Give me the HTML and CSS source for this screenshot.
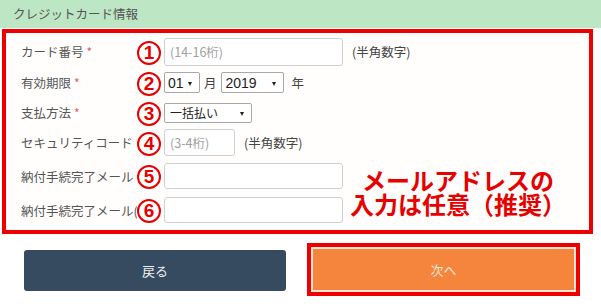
FILE: index.html
```html
<!DOCTYPE html>
<html lang="ja">
<head>
<meta charset="utf-8">
<title>クレジットカード情報</title>
<link rel="stylesheet" href="styles.css">
</head>
<body>
<header class="titlebar">クレジットカード情報</header>
<section class="card-box">
  <div class="form-grid">
    <div class="row">
      <div class="label">カード番号<span class="req">*</span></div>
      <span class="mark">1</span>
      <div class="control">
        <input class="text w-card" type="text" placeholder="(14-16桁)">
        <span class="note">(半角数字)</span>
      </div>
    </div>
    <div class="row">
      <div class="label">有効期限<span class="req">*</span></div>
      <span class="mark">2</span>
      <div class="control">
        <span class="select w-month"><span class="val">01</span><span class="arrow"></span></span>
        <span class="unit month">月</span>
        <span class="select w-year"><span class="val">2019</span><span class="arrow"></span></span>
        <span class="unit year">年</span>
      </div>
    </div>
    <div class="row">
      <div class="label">支払方法<span class="req">*</span></div>
      <span class="mark">3</span>
      <div class="control">
        <span class="select w-pay"><span class="val pay">一括払い</span><span class="arrow"></span></span>
      </div>
    </div>
    <div class="row">
      <div class="label">セキュリティコード<span class="req">*</span></div>
      <span class="mark">4</span>
      <div class="control">
        <input class="text w-cvc" type="text" placeholder="(3-4桁)">
        <span class="note">(半角数字)</span>
      </div>
    </div>
    <div class="row">
      <div class="label">納付手続完了メール</div>
      <span class="mark">5</span>
      <div class="control">
        <input class="text w-mail" type="text">
      </div>
    </div>
    <div class="row">
      <div class="label">納付手続完了メール(確認用)</div>
      <span class="mark">6</span>
      <div class="control">
        <input class="text w-mail" type="text">
      </div>
    </div>
  </div>
  <p class="annotation">メールアドレスの<br>入力は任意（推奨）</p>
</section>
<div class="actions">
  <button class="btn back" type="button">戻る</button>
  <button class="btn next" type="button">次へ</button>
</div>
</body>
</html>
```

FILE: styles.css
```css
* { box-sizing: border-box; }

html, body {
  margin: 0;
  padding: 0;
  background: #ffffff;
}

body {
  width: 601px;
  height: 306px;
  overflow: hidden;
  font-family: "Noto Sans CJK JP", "Noto Sans", sans-serif;
  color: #555;
}

.titlebar {
  height: 28px;
  line-height: 28px;
  padding-left: 13px;
  background: #bde6c4;
  font-size: 12.5px;
  color: #555;
}

.card-box {
  position: relative;
  margin: 1px 8px 0 2px;
  border: 4px solid #ee0000;
  background: #fffefd;
  padding: 3px 0 4px 15px;
}

.form-grid {
  display: grid;
  grid-template-rows: 31px 31px 29px 31px 36px 32px;
}

.row {
  position: relative;
  display: flex;
  align-items: center;
}

.label {
  width: 116px;
  margin-right: 27px;
  flex: none;
  font-size: 12.5px;
  color: #555;
  white-space: nowrap;
  overflow: hidden;
}

.req {
  color: #e65a5a;
  margin-left: 3px;
  font-size: 12px;
}

.mark {
  position: absolute;
  left: 116px;
  top: 50%;
  margin-top: -11px;
  width: 24px;
  height: 24px;
  border: 2px solid #e60000;
  border-radius: 50%;
  background: #fffefd;
  color: #e60000;
  font-family: "Liberation Sans", Arial, sans-serif;
  font-weight: 700;
  font-size: 19px;
  line-height: 20px;
  text-align: center;
}

.control {
  display: flex;
  align-items: center;
}

.text {
  height: 28px;
  border: 1px solid #cfcfcf;
  border-radius: 3px;
  background: #fff;
  padding: 0 5px;
  font-family: "Noto Sans CJK JP", sans-serif;
  font-size: 12.5px;
  color: #333;
  outline: none;
}

.text::placeholder { color: #a0a0a0; }

.w-card { width: 179px; }
.w-cvc { width: 71px; height: 27px; }
.w-mail { width: 179px; height: 26px; }

.note {
  margin-left: 9px;
  font-size: 12.5px;
  color: #444;
}

.select {
  position: relative;
  display: inline-flex;
  align-items: center;
  height: 21px;
  border: 1px solid #a8a8a8;
  border-radius: 2px;
  background: #fff;
  padding-left: 3px;
  color: #222;
}

.val {
  font-family: "Liberation Sans", Arial, sans-serif;
  font-size: 14px;
  line-height: 1;
}

.val.pay {
  font-family: "Noto Sans CJK JP", sans-serif;
  font-size: 12px;
  padding-left: 2px;
}

.arrow {
  position: absolute;
  right: 7px;
  top: 50%;
  margin-top: -1px;
  border-left: 2.5px solid transparent;
  border-right: 2.5px solid transparent;
  border-top: 4px solid #222;
}

.w-month { width: 36px; }
.w-year { width: 63px; padding-left: 4px; }
.w-pay { width: 88px; height: 20px; }

.unit {
  font-size: 12.5px;
  color: #444;
}

.unit.month { margin: 0 4px 0 4px; }
.unit.year { margin-left: 8px; }

.annotation {
  position: absolute;
  left: 344px;
  top: 135px;
  margin: 0;
  font-size: 24px;
  line-height: 24px;
  font-weight: 700;
  color: #e60000;
  text-align: center;
}

.actions {
  display: flex;
  gap: 27px;
  padding-left: 24px;
  margin-top: 15px;
}

.btn {
  height: 41px;
  border: none;
  border-radius: 3px;
  font-family: "Noto Sans CJK JP", sans-serif;
  font-size: 13px;
  cursor: pointer;
}

.back {
  width: 262px;
  margin-top: 1px;
  background: #364b5f;
  color: #f0f0f0;
}

.next {
  width: 261px;
  border-radius: 0;
  background: #f5843c;
  color: #fde8da;
  box-shadow: 0 0 0 2px #fde6d8, 0 0 0 6px #ee0000;
}
```
